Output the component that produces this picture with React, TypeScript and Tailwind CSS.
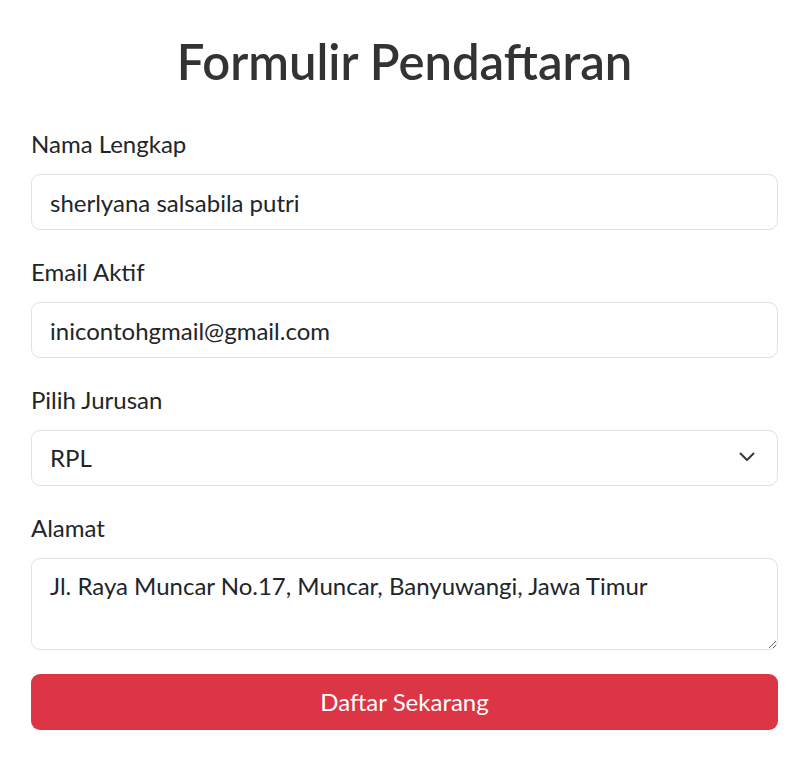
import { useState } from 'react';

const font = { fontFamily: "Lato, 'Noto Sans', Arial, sans-serif" };

export default function App() {
  const [nama, setNama] = useState('sherlyana salsabila putri');
  const [email, setEmail] = useState('inicontohgmail@gmail.com');
  const [jurusan, setJurusan] = useState('RPL');
  const [alamat, setAlamat] = useState('Jl. Raya Muncar No.17, Muncar, Banyuwangi, Jawa Timur');

  const inputCls =
    'block w-full h-[56px] rounded-[9px] border border-[#dee2e6] bg-white px-[18px] text-[24px] text-[#212529] outline-none';

  return (
    <div className="min-h-screen bg-white pl-[31px] pr-[30px] pt-[33px] text-[#212529]" style={font}>
      <h2 className="mb-[36px] text-center text-[49px] font-semibold leading-[57px] text-[#333]">
        Formulir Pendaftaran
      </h2>

      <form onSubmit={(e) => e.preventDefault()}>
        <div className="mb-[24px]">
          <label className="mb-[12px] block text-[24px] leading-[36px]">Nama Lengkap</label>
          <input className={inputCls} value={nama} onChange={(e) => setNama(e.target.value)} />
        </div>

        <div className="mb-[24px]">
          <label className="mb-[12px] block text-[24px] leading-[36px]">Email Aktif</label>
          <input className={inputCls} value={email} onChange={(e) => setEmail(e.target.value)} />
        </div>

        <div className="mb-[24px]">
          <label className="mb-[12px] block text-[24px] leading-[36px]">Pilih Jurusan</label>
          <div className="relative">
            <select
              className={inputCls + ' appearance-none pr-[54px]'}
              value={jurusan}
              onChange={(e) => setJurusan(e.target.value)}
            >
              <option>RPL</option>
              <option>TKJ</option>
              <option>MM</option>
            </select>
            <svg
              className="pointer-events-none absolute right-[23px] top-[22px]"
              width="16"
              height="10"
              viewBox="0 0 16 10"
              fill="none"
            >
              <path d="M1.5 1.5 8 8l6.5-6.5" stroke="#343a40" strokeWidth="2" strokeLinecap="round" strokeLinejoin="round" />
            </svg>
          </div>
        </div>

        <div className="mb-[24px]">
          <label className="mb-[12px] block text-[24px] leading-[36px]">Alamat</label>
          <textarea
            className="block h-[92px] w-full rounded-[9px] border border-[#dee2e6] bg-white px-[18px] py-[9px] text-[24px] leading-[36px] text-[#212529] outline-none"
            value={alamat}
            onChange={(e) => setAlamat(e.target.value)}
          />
        </div>

        <button
          type="submit"
          className="block h-[56px] w-full rounded-[9px] bg-[#dc3545] text-[24px] text-white"
        >
          Daftar Sekarang
        </button>
      </form>
    </div>
  );
}
